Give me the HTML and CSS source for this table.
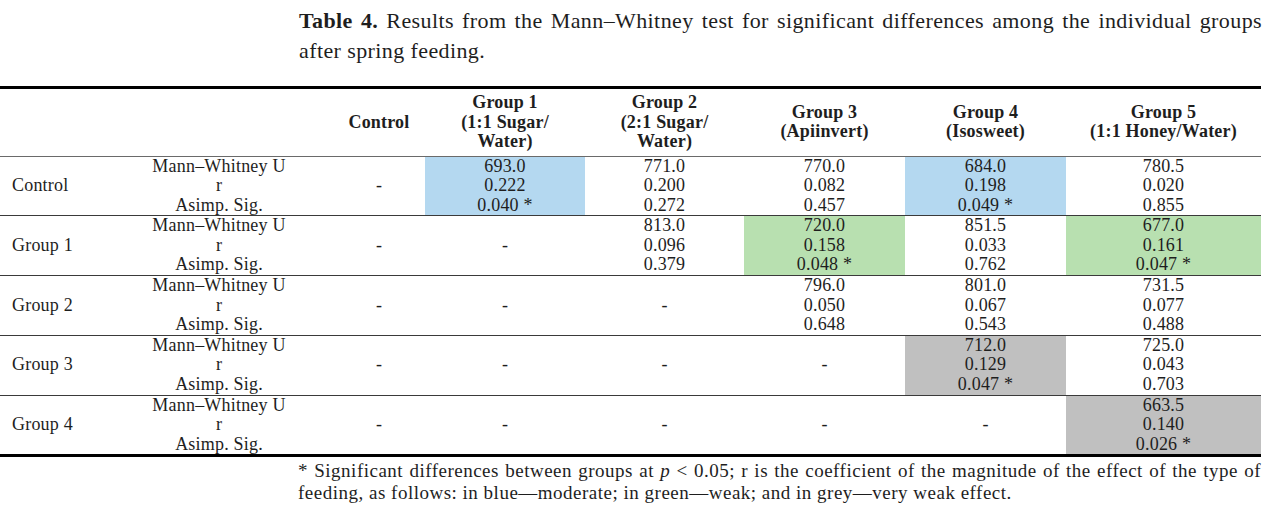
FILE: index.html
```html
<!DOCTYPE html>
<html lang="en">
<head>
<meta charset="utf-8">
<title>Table 4</title>
<link rel="stylesheet" href="styles.css">
</head>
<body>
<p class="caption"><b>Table 4.</b> Results from the Mann–Whitney test for significant differences among the individual groups after spring feeding.</p>
<table class="results">
  <colgroup>
    <col class="c-row"><col class="c-stat"><col class="c-ctrl"><col class="c-g1"><col class="c-g2"><col class="c-g3"><col class="c-g4"><col class="c-g5">
  </colgroup>
  <thead>
    <tr>
      <th></th>
      <th></th>
      <th>Control</th>
      <th>Group 1<br>(1:1 Sugar/<br>Water)</th>
      <th>Group 2<br>(2:1 Sugar/<br>Water)</th>
      <th>Group 3<br>(Apiinvert)</th>
      <th>Group 4<br>(Isosweet)</th>
      <th>Group 5<br>(1:1 Honey/Water)</th>
    </tr>
  </thead>
  <tbody>
    <tr>
      <td class="rowlabel">Control</td>
      <td>Mann–Whitney U<br>r<br>Asimp. Sig.</td>
      <td>-</td>
      <td class="blue">693.0<br>0.222<br>0.040 *</td>
      <td>771.0<br>0.200<br>0.272</td>
      <td>770.0<br>0.082<br>0.457</td>
      <td class="blue">684.0<br>0.198<br>0.049 *</td>
      <td>780.5<br>0.020<br>0.855</td>
    </tr>
    <tr>
      <td class="rowlabel">Group 1</td>
      <td>Mann–Whitney U<br>r<br>Asimp. Sig.</td>
      <td>-</td>
      <td>-</td>
      <td>813.0<br>0.096<br>0.379</td>
      <td class="green">720.0<br>0.158<br>0.048 *</td>
      <td>851.5<br>0.033<br>0.762</td>
      <td class="green">677.0<br>0.161<br>0.047 *</td>
    </tr>
    <tr>
      <td class="rowlabel">Group 2</td>
      <td>Mann–Whitney U<br>r<br>Asimp. Sig.</td>
      <td>-</td>
      <td>-</td>
      <td>-</td>
      <td>796.0<br>0.050<br>0.648</td>
      <td>801.0<br>0.067<br>0.543</td>
      <td>731.5<br>0.077<br>0.488</td>
    </tr>
    <tr>
      <td class="rowlabel">Group 3</td>
      <td>Mann–Whitney U<br>r<br>Asimp. Sig.</td>
      <td>-</td>
      <td>-</td>
      <td>-</td>
      <td>-</td>
      <td class="grey">712.0<br>0.129<br>0.047 *</td>
      <td>725.0<br>0.043<br>0.703</td>
    </tr>
    <tr>
      <td class="rowlabel">Group 4</td>
      <td>Mann–Whitney U<br>r<br>Asimp. Sig.</td>
      <td>-</td>
      <td>-</td>
      <td>-</td>
      <td>-</td>
      <td>-</td>
      <td class="grey">663.5<br>0.140<br>0.026 *</td>
    </tr>
  </tbody>
</table>
<p class="footnote">* Significant differences between groups at <i>p</i> &lt; 0.05; r is the coefficient of the magnitude of the effect of the type of feeding, as follows: in blue—moderate; in green—weak; and in grey—very weak effect.</p>
</body>
</html>
```
FILE: styles.css
```css
html, body {
  margin: 0;
  padding: 0;
  background: #ffffff;
}

body {
  font-family: "Liberation Serif", "Times New Roman", serif;
  color: #1e1e1e;
}

.caption {
  margin: 6px 0 0 299px;
  width: 963px;
  font-size: 22px;
  letter-spacing: 0.4px;
  line-height: 30px;
  text-align: justify;
}

.results {
  margin-top: 20px;
  width: 1261px;
  border-collapse: collapse;
  table-layout: fixed;
  font-size: 18px;
  line-height: 19.6px;
  letter-spacing: 0.2px;
  border-top: 3px solid #000;
  border-bottom: 3px solid #000;
}

.c-row { width: 105px; }
.c-stat { width: 228px; }
.c-ctrl { width: 92px; }
.c-g1 { width: 160px; }
.c-g2 { width: 159px; }
.c-g3 { width: 161px; }
.c-g4 { width: 161px; }
.c-g5 { width: 195px; }

.results th {
  font-weight: bold;
  text-align: center;
  vertical-align: middle;
  padding: 4px 0;
  line-height: 19.5px;
  border-bottom: 1px solid #6a6a6a;
  height: 58px;
}

.results td {
  text-align: center;
  vertical-align: middle;
  padding: 0;
  border-top: 1px solid #3a3a3a;
  white-space: nowrap;
}

.results tbody tr:first-child td {
  border-top: none;
}

.results td.rowlabel {
  text-align: left;
  padding-left: 12px;
}

.blue { background: #b4d8f0; }
.green { background: #b8e0b0; }
.grey { background: #c0c0c0; }

.footnote {
  margin: 3px 0 0 298px;
  width: 963px;
  font-size: 19px;
  letter-spacing: 0.5px;
  line-height: 22px;
  text-align: justify;
}
```
